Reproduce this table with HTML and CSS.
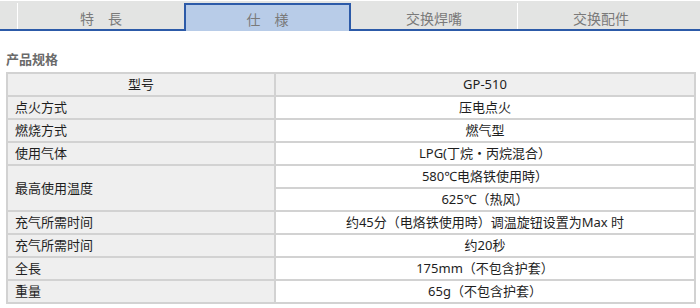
FILE: index.html
```html
<!DOCTYPE html>
<html lang="zh">
<head>
<meta charset="utf-8">
<link rel="stylesheet" href="styles.css">
</head>
<body>
<div class="tabs">
  <div class="tab">特　長</div>
  <div class="tab active">仕　様</div>
  <div class="tab">交换焊嘴</div>
  <div class="tab">交换配件</div>
</div>
<div class="title">产品规格</div>
<table class="spec">
  <tr class="head"><td class="k c">型号</td><td class="v">GP-510</td></tr>
  <tr><td class="k">点火方式</td><td class="v">压电点火</td></tr>
  <tr><td class="k">燃烧方式</td><td class="v">燃气型</td></tr>
  <tr><td class="k">使用气体</td><td class="v">LPG(丁烷・丙烷混合）</td></tr>
  <tr><td class="k" rowspan="2">最高使用温度</td><td class="v">580℃电烙铁使用時）</td></tr>
  <tr><td class="v">625℃（热风）</td></tr>
  <tr><td class="k">充气所需时间</td><td class="v">约45分（电烙铁使用時）调温旋钮设置为Max 时</td></tr>
  <tr><td class="k">充气所需时间</td><td class="v">约20秒</td></tr>
  <tr><td class="k">全長</td><td class="v">175mm（不包含护套）</td></tr>
  <tr><td class="k">重量</td><td class="v">65g（不包含护套）</td></tr>
</table>
</body>
</html>
```
FILE: styles.css
```css
html, body {
  margin: 0;
  padding: 0;
  background: #fff;
  font-family: "Noto Sans", "Noto Sans CJK SC", sans-serif;
}
.tabs {
  margin-top: 1px;
  height: 28px;
  background: #e3e4e3;
  border-bottom: 2px solid #2c5aa8;
  display: flex;
  align-items: flex-end;
  padding-left: 17px;
}
.tab {
  width: 166px;
  height: 26px;
  border-left: 1px solid #fff;
  text-align: center;
  font-size: 14px;
  line-height: 30px;
  color: #7a7a7a;
  font-family: "Noto Sans CJK SC", sans-serif;
}
.tab.active {
  width: 163px;
  height: 26px;
  background: #b8cce8;
  border: 2px solid #2c5aa8;
  border-bottom: none;
  margin-bottom: -2px;
  line-height: 28px;
}
.tab.active + .tab {
  border-left: none;
}
.title {
  margin: 17px 0 0 6px;
  font-size: 13px;
  font-weight: bold;
  color: #6a6a6a;
  height: 24px;
  line-height: 22px;
  font-family: "Noto Sans CJK SC", sans-serif;
}
.spec {
  margin-left: 6px;
  width: 690px;
  border-collapse: collapse;
  font-size: 13px;
  color: #1e1e1e;
}
.spec td {
  border: 2px solid #d2d2d2;
  height: 21px;
  padding: 0;
  line-height: 21px;
}
.spec .k {
  width: 259px;
  background: #efefef;
  padding-left: 7px;
}
.spec .k.c {
  text-align: center;
  padding-left: 0;
}
.spec .v {
  text-align: center;
}
.spec .head .v {
  background: #efefef;
}
```
